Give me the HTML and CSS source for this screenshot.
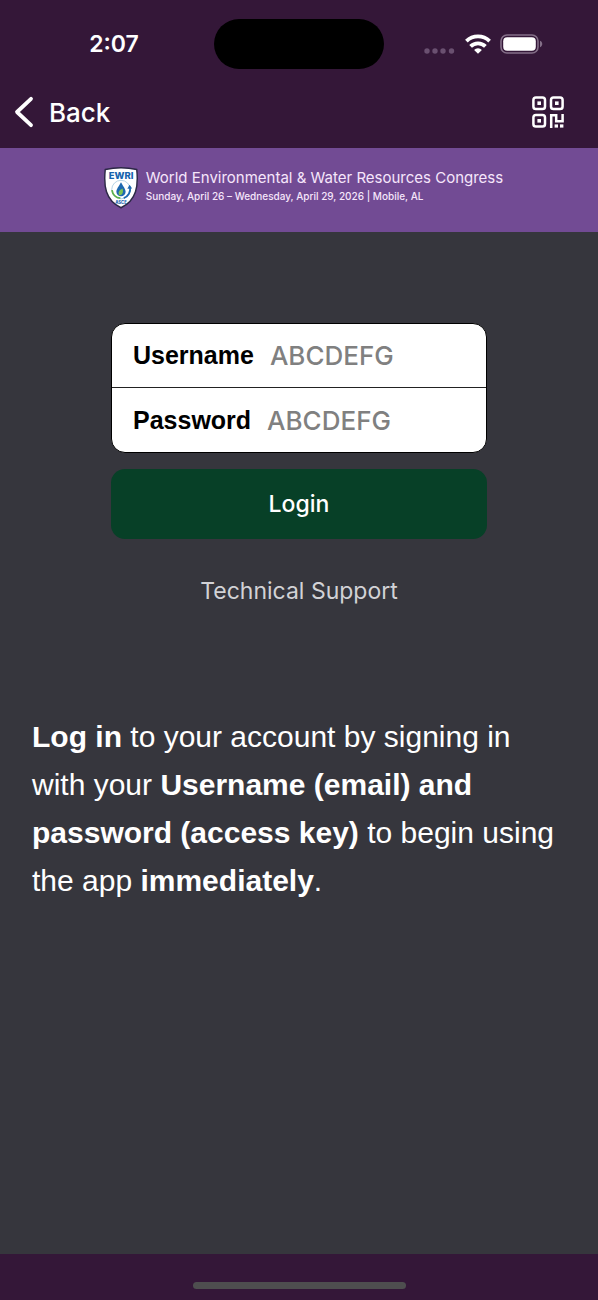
FILE: index.html
```
<!DOCTYPE html>
<html lang="en">
<head>
  <meta charset="UTF-8">
  <meta name="viewport" content="width=device-width, initial-scale=1">
  <title>World Environmental &amp; Water Resources Congress</title>
  <link rel="stylesheet" href="styles.css">
</head>
<body>
  <div class="status-bar">
    <div class="status-time">2:07</div>
    <div class="island"></div>
    <div class="status-icons">
      <svg width="32" height="6" viewBox="0 0 32 6" fill="#6a5070">
        <circle cx="3" cy="3" r="2.7"/>
        <circle cx="11" cy="3" r="2.7"/>
        <circle cx="19" cy="3" r="2.7"/>
        <circle cx="27.5" cy="3" r="2.7"/>
      </svg>
      <svg class="wifi" width="26" height="20" viewBox="0 0 26 20" fill="none" stroke="#fff" stroke-width="3.8">
        <path d="M1.4 7.2a16.6 16.6 0 0 1 23.2 0"/>
        <path d="M5.6 12.4a10.4 10.4 0 0 1 14.8 0"/>
        <path d="M13 19.8l-3.9-3.9a5.6 5.6 0 0 1 7.8 0z" fill="#fff" stroke="none"/>
      </svg>
      <svg width="43" height="20" viewBox="0 0 43 20">
        <rect x="1" y="1" width="37" height="18" rx="6" fill="none" stroke="#846f88" stroke-width="1.6"/>
        <rect x="3.2" y="3.2" width="32.6" height="13.6" rx="4" fill="#fff"/>
        <path d="M40 6.8v6.4c3-1 3-5.4 0-6.4z" fill="#846f88"/>
      </svg>
    </div>
  </div>

  <nav class="nav-bar">
    <button class="back" type="button">
      <svg width="20" height="32" viewBox="0 0 20 32" fill="none" stroke="#fff" stroke-width="3.8" stroke-linecap="round" stroke-linejoin="round">
        <path d="M17 2.8L3 16l14 13.2"/>
      </svg>
      Back
    </button>
    <button class="scan" type="button" aria-label="Scan code">
      <svg width="32" height="32" viewBox="0 0 32 32" fill="none" stroke="#fff" stroke-width="2.5">
        <rect x="1.4" y="1.4" width="11.6" height="11.6" rx="2.6"/>
        <rect x="19" y="1.4" width="11.6" height="11.6" rx="2.6"/>
        <rect x="1.4" y="19" width="11.6" height="11.6" rx="2.6"/>
        <path d="M19.2 32V19.2h5v6h6.4V18"/>
        <g fill="#fff" stroke="none">
          <rect x="5.4" y="5.4" width="3.6" height="3.6"/>
          <rect x="23" y="5.4" width="3.6" height="3.6"/>
          <rect x="5.4" y="23" width="3.6" height="3.6"/>
          <rect x="22.6" y="28.4" width="3.4" height="3.2"/>
          <rect x="28" y="28.4" width="3.4" height="3.2"/>
        </g>
      </svg>
    </button>
  </nav>

  <header class="banner">
    <svg class="shield" width="36" height="42" viewBox="0 0 34 40">
      <path d="M2 2.4Q17-.8 32 2.4C33.600 17.400 32.200 31.800 17 38.800 1.800 31.800.4 17.400 2 2.400z" fill="#fff" stroke="#2c2846" stroke-width="1.400"/>
      <text class="shield-name" x="17" y="11" text-anchor="middle">EWRI</text>
      <circle cx="17" cy="21.500" r="8.800" fill="none" stroke="#a9cce0" stroke-width=".8"/>
      <path d="M8.400 22c.6 4 3.600 7.400 8 7.600" fill="none" stroke="#5cb04a" stroke-width="1.700"/>
      <path d="M25.600 19c.8 4.600-1.600 9.200-6 10.600" fill="none" stroke="#1d68b0" stroke-width="1.700"/>
      <path d="M27.600 20.500l-2.400-3.500-2.200 3.800z" fill="#1d68b0"/>
      <path d="M17 14.500c2.200 4.200 4.400 6.400 4.400 9a4.400 4.400 0 0 1-8.800 0c0-2.600 2.200-4.800 4.400-9z" fill="#1d68b0"/>
      <path d="M18.500 20.500c-3.400 1.500-4.600 3.800-3.200 6.400 3 .2 4.300-2.800 3.200-6.400z" fill="#7cc256"/>
      <text class="shield-org" x="17" y="35" text-anchor="middle">ASCE</text>
    </svg>
    <div class="banner-text">
      <h1>World Environmental &amp; Water Resources Congress</h1>
      <p>Sunday, April 26 – Wednesday, April 29, 2026 | Mobile, AL</p>
    </div>
  </header>

  <main>
    <form class="login-form">
      <div class="fields">
        <div class="field">
          <label for="username">Username</label>
          <input type="text" id="username" placeholder="ABCDEFG">
        </div>
        <div class="field">
          <label for="password">Password</label>
          <input type="password" id="password" placeholder="ABCDEFG">
        </div>
      </div>
      <button class="login-button" type="submit">Login</button>
    </form>
    <a class="support" href="#support">Technical Support</a>
    <p class="message"><b>Log in</b> to your account by signing in with your <b>Username (email) and password (access key)</b> to begin using the app <b>immediately</b>.</p>
  </main>

  <footer>
    <div class="home-indicator"></div>
  </footer>
</body>
</html>
```
FILE: styles.css
```
* {
  box-sizing: border-box;
}
body {
  display: flex;
  flex-direction: column;
  min-height: 100vh;
  margin: 0;
  background-color: #36363d;
  color: #fff;
  font-family: Inter, sans-serif;
}
button {
  border: none;
  color: #fff;
  font-family: inherit;
  cursor: pointer;
}
.status-bar {
  display: grid;
  grid-template-columns: 1fr 170px 1fr;
  align-items: center;
  height: 76px;
  padding-top: 12px;
  background-color: #341738;
}
.status-time {
  padding-left: 14px;
  font-size: 23px;
  font-weight: 600;
  text-align: center;
}
.island {
  height: 50px;
  border-radius: 25px;
  background-color: #000;
}
.status-icons {
  display: flex;
  align-items: center;
  justify-content: flex-end;
  gap: 9px;
  padding-right: 55px;
}
.status-icons svg:first-child {
  margin-top: 13px;
}
.nav-bar {
  display: flex;
  align-items: center;
  justify-content: space-between;
  height: 72px;
  padding: 0 34px 0 14px;
  background-color: #341738;
}
.back {
  display: flex;
  align-items: center;
  gap: 15px;
  padding: 0;
  background: none;
  font-size: 26px;
  font-weight: 500;
}
.scan {
  display: flex;
  padding: 0;
  background: none;
}
.banner {
  display: flex;
  justify-content: center;
  gap: 7px;
  height: 84px;
  padding: 19px 0 0 8px;
  background-color: #724b94;
}
.shield {
  flex: none;
}
.shield-name {
  fill: #1763ae;
  font: 800 9px Inter, sans-serif;
}
.shield-org {
  fill: #1763ae;
  font: 800 4px Inter, sans-serif;
}
.banner-text {
  color: #f6e6fb;
}
.banner h1 {
  margin: 0;
  font-size: 15px;
  font-weight: 400;
  line-height: 22px;
}
.banner p {
  margin: 0;
  font-size: 10px;
  font-weight: 500;
  line-height: 14px;
}
main {
  display: flex;
  flex: 1;
  flex-direction: column;
  align-items: center;
  padding: 91px 32px 40px;
}
.login-form {
  width: 376px;
  max-width: 100%;
}
.fields {
  overflow: hidden;
  border: 1px solid #000;
  border-radius: 14px;
  background-color: #fff;
}
.field {
  display: flex;
  align-items: center;
  gap: 16px;
  height: 63px;
  padding: 0 21px;
}
.field + .field {
  height: 65px;
  border-top: 1px solid #222;
}
.field label {
  color: #000;
  font-family: "Liberation Sans", sans-serif;
  font-size: 25px;
  font-weight: bold;
}
.field input {
  flex: 1;
  min-width: 0;
  padding: 0;
  border: none;
  outline: none;
  background: none;
  color: #000;
  font-family: Inter, sans-serif;
  font-size: 26px;
}
.field input::placeholder {
  color: #808080;
  font-weight: 500;
}
.login-button {
  width: 100%;
  height: 70px;
  margin-top: 16px;
  border-radius: 14px;
  background-color: #074027;
  font-size: 23px;
  font-weight: 500;
}
.support {
  margin-top: 36px;
  color: #d2d2d6;
  font-size: 23px;
  line-height: 32px;
  text-decoration: none;
}
.message {
  width: 100%;
  margin: 106px 0 0;
  padding-right: 8px;
  font-family: "Liberation Sans", sans-serif;
  font-size: 30px;
  line-height: 48px;
}
footer {
  display: flex;
  justify-content: center;
  height: 46px;
  padding-top: 28px;
  background-color: #341738;
}
.home-indicator {
  width: 213px;
  height: 7px;
  border-radius: 4px;
  background-color: #4e4e4f;
}
```
